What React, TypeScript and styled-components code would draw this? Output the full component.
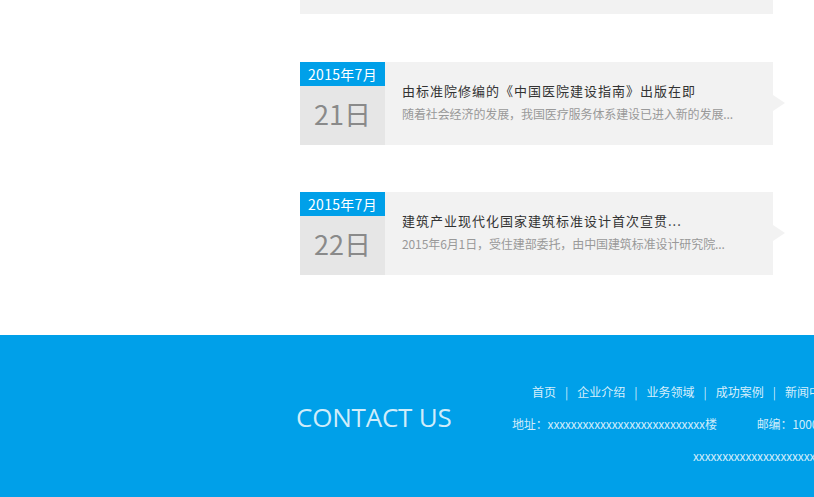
import React from "react";
import styled, { createGlobalStyle } from "styled-components";

const Global = createGlobalStyle`
  html, body { margin: 0; padding: 0; background: #fff; }
  body { font-family: "Noto Sans", "Noto Sans CJK SC", sans-serif; overflow: hidden; }
`;

const Page = styled.div`
  width: 814px;
  height: 497px;
  overflow: hidden;
  display: flex;
  flex-direction: column;
`;

const NewsSection = styled.section`
  padding-left: 300px;
  display: flex;
  flex-direction: column;
  gap: 47px;
  padding-bottom: 60px;
`;

const TopBox = styled.div`
  width: 473px;
  height: 14px;
  background: #f2f2f2;
  margin-bottom: 1px;
`;

const Card = styled.div`
  position: relative;
  width: 473px;
  height: 83px;
  display: flex;
  background: #f2f2f2;
  &::after {
    content: "";
    position: absolute;
    left: 473px;
    top: 33px;
    border-left: 12px solid #f2f2f2;
    border-top: 8px solid transparent;
    border-bottom: 8px solid transparent;
  }
`;

const DateBox = styled.div`
  width: 85px;
  display: flex;
  flex-direction: column;
  background: #e6e6e6;
`;

const Month = styled.div`
  height: 24px;
  background: #00a0e9;
  color: #fff;
  font-size: 14px;
  line-height: 24px;
  text-align: center;
  font-family: "Noto Sans CJK SC", sans-serif;
  letter-spacing: 0.3px;
`;

const Day = styled.div`
  flex: 1;
  display: flex;
  align-items: center;
  justify-content: center;
  color: #8a8a8a;
  font-size: 27px;
  font-family: "Noto Sans CJK SC", sans-serif;
  padding-bottom: 5px;
`;

const Content = styled.div`
  flex: 1;
  padding: 20px 0 0 17px;
  display: flex;
  flex-direction: column;
  gap: 5px;
  font-family: "Noto Sans CJK SC", sans-serif;
`;

const Title = styled.div`
  font-size: 13px;
  line-height: 18px;
  color: #333;
  letter-spacing: 1px;
`;

const Desc = styled.div`
  font-size: 12px;
  line-height: 18px;
  color: #999;
  letter-spacing: -0.1px;
`;

const Footer = styled.footer`
  flex: 1;
  background: #00a0e9;
  display: flex;
  padding-left: 296px;
  white-space: nowrap;
`;

const ContactTitle = styled.div`
  flex: none;
  width: 216px;
  padding-top: 64px;
  font-size: 26px;
  color: rgba(255, 255, 255, 0.82);
  font-family: "Open Sans", "Noto Sans", sans-serif;
  letter-spacing: -0.2px;
`;

const Lines = styled.div`
  flex: none;
  display: flex;
  flex-direction: column;
  padding-top: 47px;
  gap: 14px;
  font-family: "Noto Sans CJK SC", sans-serif;
  font-size: 12px;
  color: rgba(255, 255, 255, 0.82);
`;

const Line = styled.div<{ $indent: number }>`
  display: flex;
  align-items: center;
  height: 18px;
  padding-left: ${(p) => p.$indent}px;
`;

const NavLink = styled.span`
  color: rgba(255, 255, 255, 0.85);
`;

const Sep = styled.span`
  margin: 0 9px;
`;

const Field = styled.span<{ $gap?: number }>`
  margin-right: ${(p) => p.$gap ?? 0}px;
  letter-spacing: -0.15px;
`;

const navItems = ["首页", "企业介绍", "业务领域", "成功案例", "新闻中心", "联系我们"];

const news = [
  {
    month: "2015年7月",
    day: "21日",
    title: "由标准院修编的《中国医院建设指南》出版在即",
    desc: "随着社会经济的发展，我国医疗服务体系建设已进入新的发展...",
  },
  {
    month: "2015年7月",
    day: "22日",
    title: "建筑产业现代化国家建筑标准设计首次宣贯...",
    desc: "2015年6月1日，受住建部委托，由中国建筑标准设计研究院...",
  },
];

export default function App() {
  return (
    <Page>
      <Global />
      <NewsSection>
        <TopBox />
        {news.map((n) => (
          <Card key={n.day}>
            <DateBox>
              <Month>{n.month}</Month>
              <Day>{n.day}</Day>
            </DateBox>
            <Content>
              <Title>{n.title}</Title>
              <Desc>{n.desc}</Desc>
            </Content>
          </Card>
        ))}
      </NewsSection>
      <Footer>
        <ContactTitle>CONTACT US</ContactTitle>
        <Lines>
          <Line $indent={20}>
            {navItems.map((item, i) => (
              <React.Fragment key={item}>
                {i > 0 && <Sep>|</Sep>}
                <NavLink>{item}</NavLink>
              </React.Fragment>
            ))}
          </Line>
          <Line $indent={0}>
            <Field $gap={40}>地址：{"x".repeat(27)}楼</Field>
            <Field>邮编：100000</Field>
          </Line>
          <Line $indent={181}>
            <Field>{"x".repeat(40)}</Field>
          </Line>
        </Lines>
      </Footer>
    </Page>
  );
}
